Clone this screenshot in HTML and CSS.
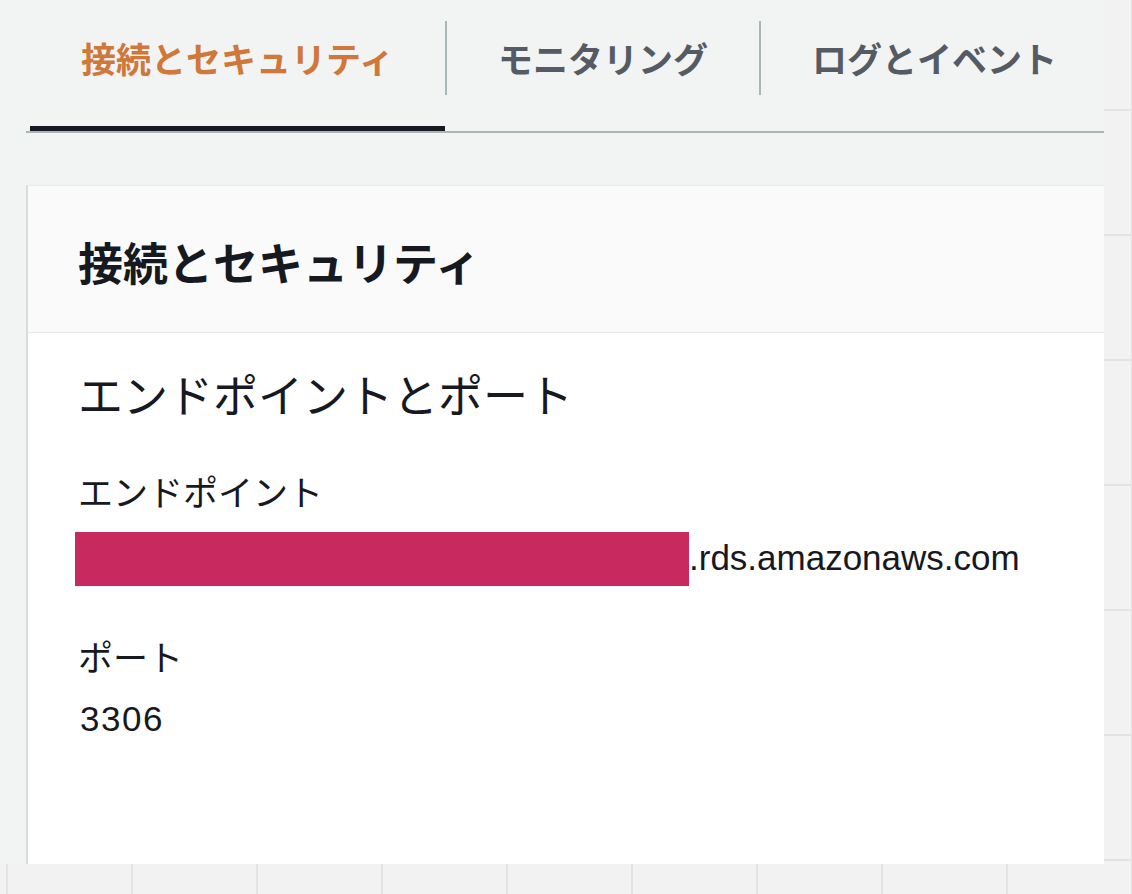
FILE: index.html
```html
<!DOCTYPE html>
<html lang="ja">
<head>
    <meta charset="UTF-8">
    <meta name="viewport" content="width=device-width, initial-scale=1.0">
    <title>接続とセキュリティ</title>
    <link rel="stylesheet" href="styles.css">
</head>
<body>

    <div class="console">
        <div class="tabs">
            <div class="tab active"><span class="tab-label">接続とセキュリティ</span></div>
            <div class="tab"><span class="tab-label">モニタリング</span></div>
            <div class="tab"><span class="tab-label">ログとイベント</span></div>
        </div>

        <div class="card">
            <div class="card-header">
                <h2>接続とセキュリティ</h2>
            </div>
            <div class="card-body">
                <h3>エンドポイントとポート</h3>
                <div class="field">
                    <div class="label">エンドポイント</div>
                    <div class="value endpoint"><span class="redacted"></span>.rds.amazonaws.com</div>
                </div>
                <div class="field">
                    <div class="label">ポート</div>
                    <div class="value port">3306</div>
                </div>
            </div>
        </div>
    </div>

</body>
</html>
```

FILE: styles.css
```css
body {
    margin: 0;
    font-family: "Liberation Sans", "Noto Sans CJK JP", sans-serif;
    color: #16191f;
    background-color: #f2f2f2;
    background-image:
        linear-gradient(to right, #e3e3e3 2px, transparent 2px),
        linear-gradient(to bottom, #e3e3e3 2px, transparent 2px);
    background-size: 125px 125px;
    background-position: 6px 109px;
    height: 894px;
    overflow: hidden;
}
.console {
    width: 1104px;
    height: 864px;
    box-sizing: border-box;
    padding-left: 26px;
    background: #f2f3f3;
    display: flex;
    flex-direction: column;
}
.tabs {
    display: flex;
    padding-left: 4px;
    border-bottom: 2px solid #aab7b8;
}
.tab {
    flex-shrink: 0;
    white-space: nowrap;
    padding: 21px 0 31px;
    border-bottom: 5px solid transparent;
    font-family: "Noto Sans CJK JP", sans-serif;
    font-weight: bold;
    font-size: 35px;
    color: #545b64;
}
.tab + .tab .tab-label {
    border-left: 2px solid #aab7b8;
}
.tab-label {
    display: block;
    height: 74px;
    line-height: 74px;
    padding: 0 51px;
}
.tab.active {
    border-bottom-color: #16191f;
    color: #d0783a;
}
.card {
    flex: 1;
    margin-top: 52px;
    background: white;
    border-left: 2px solid #d9dcdc;
    border-top: 1px solid #e8eaea;
    display: flex;
    flex-direction: column;
}
.card-header {
    height: 146px;
    background: #fafafa;
    border-bottom: 1px solid #e6e8e8;
    padding-left: 50px;
    display: flex;
    align-items: center;
}
.card-header h2 {
    margin: 0;
    font-family: "Noto Sans CJK JP", sans-serif;
    font-size: 45px;
    font-weight: bold;
    padding-top: 4px;
}
.card-body {
    padding: 31px 0 0 50px;
}
.card-body h3 {
    margin: 0 0 45px;
    font-family: "Noto Sans CJK JP", sans-serif;
    font-size: 45px;
    font-weight: normal;
    line-height: 60px;
}
.field {
    margin-bottom: 49px;
}
.label {
    font-size: 35px;
    line-height: 50px;
    margin-bottom: 12px;
}
.value {
    font-size: 35px;
    line-height: 50px;
}
.endpoint {
    display: flex;
    align-items: center;
    height: 54px;
    margin-left: -3px;
}
.redacted {
    display: inline-block;
    width: 614px;
    height: 54px;
    background: #c8295f;
    margin-top: 1px;
}
.port {
    letter-spacing: 1.5px;
    padding-left: 2px;
}
.field:last-child .label {
    margin-bottom: 10px;
}
```
